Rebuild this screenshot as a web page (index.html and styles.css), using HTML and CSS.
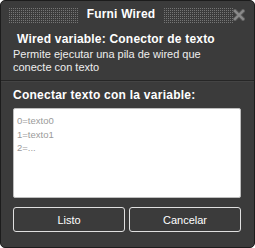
FILE: index.html
```html
<!DOCTYPE html>
<html lang="es">
<head>
  <meta charset="UTF-8">
  <title>Furni Wired</title>
  <link rel="stylesheet" href="styles.css">
</head>
<body>
  <div class="window">
    <div class="header">
      <div class="dots"></div>
      <div class="title">Furni Wired</div>
      <div class="dots"></div>
      <svg class="close" width="12" height="12" viewBox="0 0 12 12">
        <path d="M2 2 L10 10 M10 2 L2 10" stroke="#5a5a5a" stroke-width="4" stroke-linecap="square"/>
        <path d="M2 2 L10 10 M10 2 L2 10" stroke="#8a8a8a" stroke-width="2.2" stroke-linecap="square"/>
      </svg>
    </div>

    <div class="info">
      <h1>Wired variable: Conector de texto</h1>
      <p>Permite ejecutar una pila de wired que conecte con texto</p>
    </div>

    <div class="separator"></div>

    <div class="content">
      <label for="vars">Conectar texto con la variable:</label>
      <textarea id="vars" placeholder="0=texto0&#10;1=texto1&#10;2=..."></textarea>
      <div class="buttons">
        <button>Listo</button>
        <button>Cancelar</button>
      </div>
    </div>
  </div>
</body>
</html>
```

FILE: styles.css
```css
body {
  margin: 0;
  background-color: #ffffff;
  font-family: "Liberation Sans", Arial, sans-serif;
}

.window {
  width: 255px;
  height: 248px;
  box-sizing: border-box;
  border: 1px solid #1c1c1c;
  border-radius: 5px;
  background-color: #3b3b3b;
  color: #ffffff;
  overflow: hidden;
}

.header {
  display: flex;
  align-items: center;
  height: 17px;
  margin: 5px 9px 0 8px;
}

/* dot grid: horizontal lines masked by every other column */
.dots {
  flex: 1;
  height: 16px;
  background:
    repeating-linear-gradient(90deg, transparent 0 1px, #3b3b3b 1px 2px),
    repeating-linear-gradient(0deg, #757575 0 1px, transparent 1px 2px);
}

.title {
  padding: 0 9px;
  font-size: 12px;
  font-weight: bold;
  line-height: 17px;
  letter-spacing: 0.2px;
}

.close {
  display: block;
}

.info {
  padding: 0 12px;
}

.info h1 {
  margin: 9px 0 0 4px;
  font-size: 12px;
  line-height: 14px;
  font-weight: bold;
  letter-spacing: 0.2px;
}

.info p {
  max-width: 205px;
  margin: 2px 0 0;
  font-size: 11px;
  line-height: 13px;
  color: #eeeeee;
}

.separator {
  height: 1px;
  margin-top: 6px;
  background-color: #262626;
  border-bottom: 1px solid #444444;
}

.content {
  display: flex;
  flex-direction: column;
  padding: 0 13px 0 12px;
}

.content label {
  margin-top: 6px;
  font-size: 12px;
  line-height: 14px;
  font-weight: bold;
  letter-spacing: 0.25px;
}

textarea {
  margin-top: 6px;
  height: 90px;
  box-sizing: border-box;
  padding: 5px 3px;
  border: 1px solid #bdbdbd;
  border-radius: 2px;
  background-color: #ffffff;
  font-family: "Liberation Sans", Arial, sans-serif;
  font-size: 9.5px;
  line-height: 13.5px;
  resize: none;
  outline: none;
}

textarea::placeholder {
  color: #9a9a9a;
}

.buttons {
  display: flex;
  gap: 4px;
  margin-top: 9px;
}

.buttons button {
  flex: 1;
  height: 25px;
  border: 1px solid #e0e0e0;
  border-radius: 3px;
  background-color: transparent;
  color: #ffffff;
  font-family: "Liberation Sans", Arial, sans-serif;
  font-size: 11px;
  cursor: pointer;
}
```
